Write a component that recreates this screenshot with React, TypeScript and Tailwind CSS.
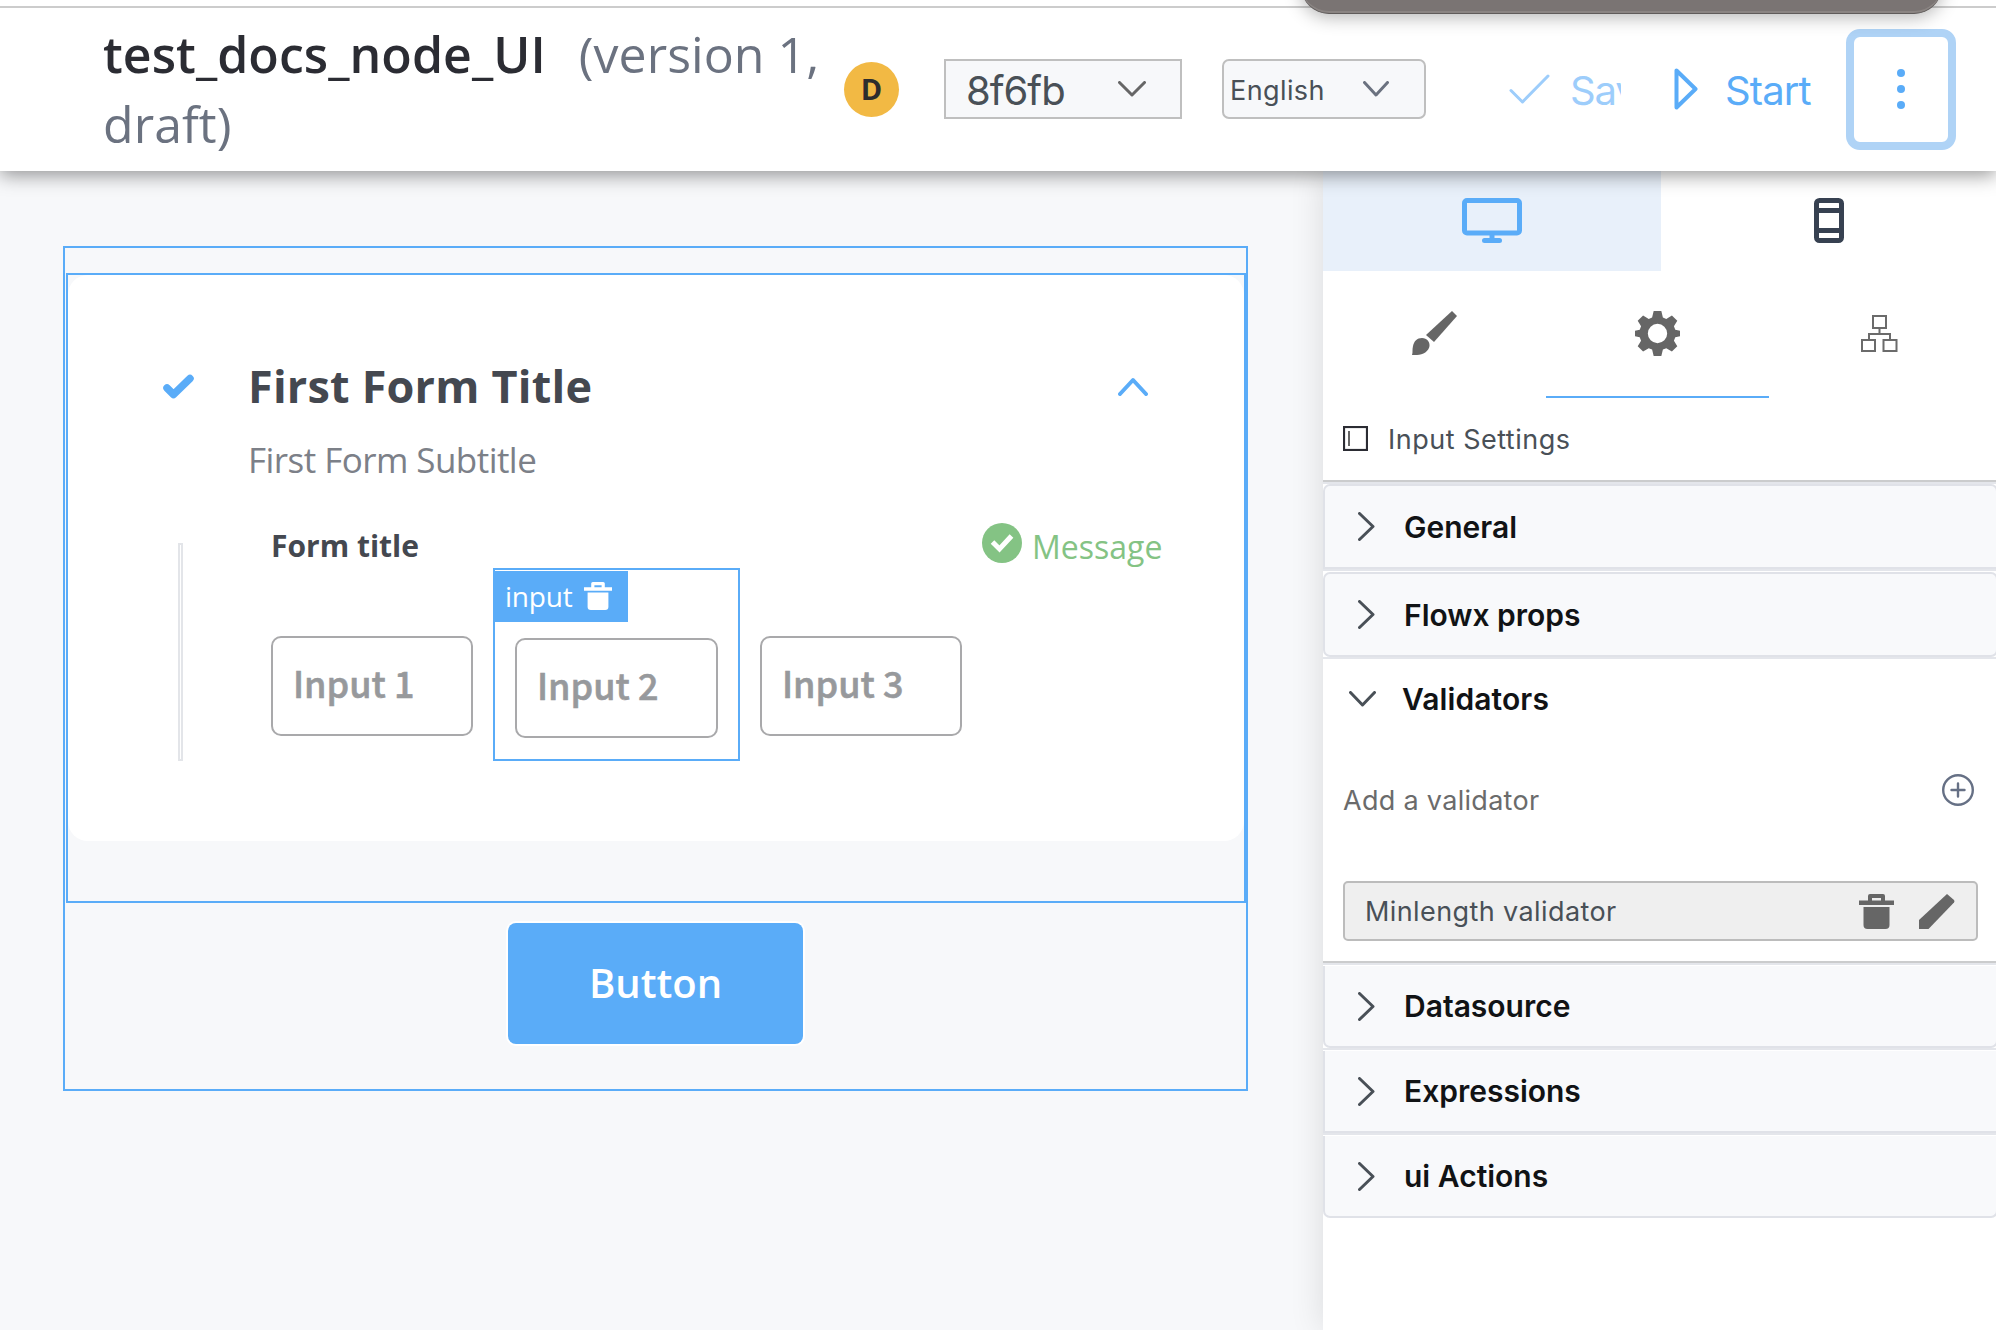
import React from "react";

function Chevron({ dir, w, h, color, sw = 3 }: { dir: "down" | "up" | "right"; w: number; h: number; color: string; sw?: number }) {
  const p = sw / 2;
  const pts =
    dir === "down"
      ? `${p},${p} ${w / 2},${h - p - 0.5} ${w - p},${p}`
      : dir === "up"
        ? `${p},${h - p} ${w / 2},${p + 1} ${w - p},${h - p}`
        : `${p},${p} ${w - p - 0.5},${h / 2} ${p},${h - p}`;
  return (
    <svg width={w} height={h} viewBox={`0 0 ${w} ${h}`} fill="none" className="shrink-0">
      <polyline points={pts} stroke={color} strokeWidth={sw} strokeLinecap="round" strokeLinejoin="round" />
    </svg>
  );
}

function Trash({ w, h, color }: { w: number; h: number; color: string }) {
  return (
    <svg width={w} height={h} viewBox="0 0 35 35" preserveAspectRatio="none" fill={color} className="shrink-0">
      <path fillRule="evenodd" d="M11 0h13a2 2 0 0 1 2 2v4.500h9v4.500H0V6.500h9V2a2 2 0 0 1 2-2Zm2 4v2.500h9V4Z" />
      <path d="M4.500 13h26v18a4 4 0 0 1-4 4h-18a4 4 0 0 1-4-4Z" />
    </svg>
  );
}

function Header() {
  return (
    <header className="relative z-20 flex h-[171px] shrink-0 bg-white shadow-[0_4px_18px_rgba(0,0,0,0.42)]">
      <div className="absolute inset-x-0 top-[6px] h-[2px] bg-[#cccccc]" />
      <div className="absolute -top-10 left-[1301px] h-[54px] w-[641px] rounded-b-[28px] border-b border-[#5f5b5a] bg-[#7a7473] shadow-[0_3px_18px_rgba(0,0,0,0.3),inset_0_-2px_0_#8a8482]" />
      <h1 className="ml-[103px] mt-[19px] w-[741px] font-['Open_Sans'] text-[50px] leading-[70px] tracking-[0.05px] text-[#6b7280]">
        <span className="mr-[33px] font-semibold text-[#2b2c33]">test_docs_node_UI</span>
        (version 1,
        <br />
        draft)
      </h1>
      <div className="mt-[62px] flex size-[55px] items-center justify-center rounded-full bg-[#f2b944] pb-[2px] font-['Open_Sans'] text-[29px] font-bold text-[#2d2d2d]">
        D
      </div>
      <div className="ml-[45px] mt-[59px] flex h-[60px] w-[238px] items-center justify-between border-2 border-[#bfbfbf] bg-[#f7f8fa] pl-[20px] pr-[34px] text-[40px] text-[#495057]">
        <span className="mt-[3px] tracking-[-1px]">8f6fb</span>
        <Chevron dir="down" w={28} h={16} color="#666" />
      </div>
      <div className="ml-[40px] mt-[59px] flex h-[60px] w-[204px] items-center justify-between rounded-[7px] border-2 border-[#bfbfbf] bg-[#f7f8fa] pl-[6px] pr-[35px] text-[27px] text-[#495057]">
        <span className="mt-[4px] tracking-[0.4px]">English</span>
        <Chevron dir="down" w={26} h={16} color="#6b7280" />
      </div>
      <div className="ml-[83px] mt-[59px] flex h-[60px] items-center text-[40px] text-[#9dcdfb]">
        <svg width="41" height="30" viewBox="0 0 41 30" fill="none">
          <path d="M2 16.500 13.500 28 39 2" stroke="currentColor" strokeWidth="3" strokeLinecap="round" strokeLinejoin="round" />
        </svg>
        <span className="ml-[20px] mt-[3px] w-[51px] overflow-hidden tracking-[-1.2px]">Save</span>
      </div>
      <div className="ml-[53px] mt-[59px] flex h-[60px] items-center text-[40px] text-[#5aacf8]">
        <svg width="24" height="42" viewBox="0 0 24 42" fill="none">
          <path d="M2.500 2.500v37L21.500 21Z" stroke="currentColor" strokeWidth="4" strokeLinejoin="round" />
        </svg>
        <span className="ml-[27px] mt-[3px] w-[121px] tracking-[-0.9px]">Start</span>
      </div>
      <div className="mt-[29px] flex h-[121px] w-[110px] shrink-0 flex-col items-center justify-center gap-2 rounded-[14px] border-8 border-[#afd3f6] pb-0.5">
        <i className="size-2 rounded-full bg-[#5aacf8]" />
        <i className="size-2 rounded-full bg-[#5aacf8]" />
        <i className="size-2 rounded-full bg-[#5aacf8]" />
      </div>
    </header>
  );
}

function InputBox({ label, cls = "w-[202px]" }: { label: string; cls?: string }) {
  return (
    <div
      className={`flex h-[100px] items-center rounded-[10px] border-2 border-[#a9a9ab] bg-white pb-[9px] pl-[20px] font-['Noto_Sans_CJK_SC'] text-[36px] font-medium text-[#97999c] [-webkit-text-stroke:0.6px_#97999c] ${cls}`}
    >
      {label}
    </div>
  );
}

function Canvas() {
  return (
    <main className="w-[1323px] shrink-0 bg-[#f7f8fa] pl-[63px] pt-[75px] font-['Open_Sans']">
      <section className="h-[845px] w-[1185px] border-2 border-[#5aacf8] pl-px pt-[25px]">
        <div className="h-[630px] w-[1180px] border-2 border-[#5aacf8]">
          <div className="h-[566px] rounded-[20px] bg-white pt-[79px]">
            <div className="flex h-[64px] items-center pl-[95px] pr-[96px]">
              <svg width="31" height="25" viewBox="0 0 31 25" fill="none">
                <path d="M4 14 10.500 20.500 27 4.500" stroke="#5aacf8" strokeWidth="7.500" strokeLinecap="round" strokeLinejoin="round" />
              </svg>
              <h2 className="ml-[54px] text-[45px] font-bold leading-[64px] tracking-[0.2px] text-[#444850]">First Form Title</h2>
              <div className="ml-auto">
                <Chevron dir="up" w={30} h={19} color="#5aacf8" sw={4} />
              </div>
            </div>
            <p className="ml-[180px] mt-[18px] text-[35px] leading-[48px] tracking-[-0.55px] text-[#7c8088]">First Form Subtitle</p>
            <div className="ml-[110px] mt-[39px] flex">
              <div className="mt-[20px] h-[218px] w-[5px] border-2 border-[#e3e5e9]" />
              <div className="ml-[88px]">
                <div className="flex h-[45px]">
                  <h3 className="mt-[3px] w-[711px] text-[30px] font-bold leading-[40px] text-[#444850]">Form title</h3>
                  <svg width="40" height="40" viewBox="0 0 40 40" fill="none">
                    <circle cx="20" cy="20" r="20" fill="#84c384" />
                    <path d="m10.500 19 7 7L29.500 13" stroke="#fff" strokeWidth="5" />
                  </svg>
                  <span className="ml-[10px] text-[32px] leading-[48px] text-[#84c384]">Message</span>
                </div>
                <div className="flex items-start">
                  <div className="mt-[68px]">
                    <InputBox label="Input 1" />
                  </div>
                  <div className="relative ml-5 h-[193px] w-[247px] border-2 border-[#5aacf8] pl-5 pt-[68px]">
                    <div className="absolute -left-[2px] top-px flex h-[51px] w-[135px] items-center bg-[#5aacf8] pb-[2px] pl-[12px] text-[28px] text-white">
                      <span className="w-[79px] tracking-[-0.2px]">input</span>
                      <Trash w={28} h={28} color="#fff" />
                    </div>
                    <InputBox label="Input 2" cls="w-[203px]" />
                  </div>
                  <div className="ml-5 mt-[68px]">
                    <InputBox label="Input 3" />
                  </div>
                </div>
              </div>
            </div>
          </div>
        </div>
        <button className="ml-[442px] mt-[20px] flex h-[121px] w-[295px] items-center justify-center rounded-[8px] bg-[#5aacf8] pb-0.5 text-[40px] font-semibold text-white ring-2 ring-white">
          Button
        </button>
      </section>
    </main>
  );
}

function Row({ label, cls }: { label: string; cls: string }) {
  return (
    <div className={`-mr-[2px] flex items-center border-2 border-[#e0e2e8] bg-[#f8f9fb] pl-[33px] text-[30px] font-semibold text-[#111315] ${cls}`}>
      <Chevron dir="right" w={17} h={29} color="#495057" />
      <span className="ml-[29px] mt-px">{label}</span>
    </div>
  );
}

function Line({ dark = false }: { dark?: boolean }) {
  return (
    <>
      {dark && <div className="h-[2px] bg-[#cbcccd]" />}
      <div className="h-[2px] bg-[#e4e6eb]" />
    </>
  );
}

function Panel() {
  return (
    <aside className="relative z-10 w-[673px] shrink-0 bg-white shadow-[0_0_32px_rgba(0,0,0,0.12)]">
      <div className="flex h-[100px]">
        <div className="flex w-[338px] justify-center bg-[#e8f0fa] pt-[27px]">
          <svg width="60" height="45" viewBox="0 0 60 45" fill="none">
            <rect x="2.500" y="2.500" width="55" height="32.500" rx="2.500" stroke="#5aacf8" strokeWidth="5" />
            <path d="M27.500 36h5v5h-5z" fill="#5aacf8" />
            <rect x="20" y="40" width="20" height="5" rx="2.500" fill="#5aacf8" />
          </svg>
        </div>
        <div className="flex w-[335px] justify-center pt-[27px]">
          <svg width="30" height="45" viewBox="0 0 30 45" fill="none" stroke="#374151" strokeWidth="5">
            <rect x="2.500" y="2.500" width="25" height="40" rx="3" />
            <path d="M2.500 12.500h25M2.500 32.500h25" />
          </svg>
        </div>
      </div>
      <div className="flex h-[127px]">
        <div className="flex w-[223px] justify-center pt-[40px]">
          <svg width="45" height="44" viewBox="0 0 45 44" fill="#666">
            <path d="M40 0 45 5 22 31 14 24Z" />
            <path d="M10 27c5 0 8 4 7.500 8C17 40 11 44 5 44H0C1 41 0 39 1 35c1-5 4-8 9-8Z" />
          </svg>
        </div>
        <div className="flex w-[223px] justify-center border-b-2 border-[#5aacf8] pt-[40px]">
          <svg width="45" height="45" viewBox="2 2 20 20" fill="#666">
            <path fillRule="evenodd" d="M10.300 2h3.400l.7 2.900 1.500.6L18.400 4l2.400 2.300-1.500 2.500.6 1.500 2.100.5v2.400l-2.100.5-.6 1.500 1.500 2.500-2.400 2.300-2.500-1.500-1.500.6-.7 2.900h-3.400l-.7-2.900-1.500-.6L5.600 20l-2.400-2.300 1.500-2.500-.6-1.500L2 13.200v-2.400l2.100-.5.600-1.500-1.500-2.500L5.600 4l2.500 1.500 1.500-.6ZM12 7.700a4.300 4.300 0 1 0 0 8.600 4.300 4.300 0 0 0 0-8.600Z" />
          </svg>
        </div>
        <div className="flex w-[221px] justify-center pt-[44px]">
          <svg width="37" height="37" viewBox="0 0 37 37" fill="none" stroke="#6b6b6b" strokeWidth="2">
            <path d="M12 1h13v12H12zM1 25h13v11H1zM22.500 25h13v11h-13zM18.500 13v6M8 25v-6h21v6" />
          </svg>
        </div>
      </div>
      <div className="flex h-[82px] items-center pb-[1px] pl-5 text-[27px] tracking-[0.5px] text-[#495057]">
        <svg width="25" height="25" viewBox="0 0 25 25" fill="none">
          <rect x="1" y="1" width="23" height="23" stroke="#2b2c33" strokeWidth="2.200" />
          <path d="M6 5v15" stroke="#666" strokeWidth="2" />
        </svg>
        <span className="ml-[20px] mt-[4px]">Input Settings</span>
      </div>
      <Line dark />
      <Row label="General" cls="h-[85px] rounded-t-[7px]" />
      <Line />
      <Row label="Flowx props" cls="mt-px h-[85px] rounded-[7px]" />
      <Line />
      <div className="flex h-[80px] items-center pl-[26px] text-[30px] font-semibold text-[#111315]">
        <Chevron dir="down" w={27} h={16} color="#495057" />
        <span className="ml-[26px] mt-px tracking-[0.1px]">Validators</span>
      </div>
      <div className="flex h-[142px] justify-between pl-[20px] pr-[22px] text-[27px] tracking-[0.3px] text-[#6b6b6b]">
        <span className="mt-[42px]">Add a validator</span>
        <svg width="32" height="32" viewBox="0 0 32 32" fill="none" stroke="#667085" strokeWidth="2.400" strokeLinecap="round" className="mt-[35px]">
          <circle cx="16" cy="16" r="14.800" />
          <path d="M9.500 16h13M16 9.500v13" />
        </svg>
      </div>
      <div className="ml-5 flex h-[60px] w-[635px] items-center rounded-[5px] border-2 border-[#bcbcbc] bg-[#efefef] pl-[20px] pr-[21px] text-[27px] tracking-[0.4px] text-[#495057]">
        <span className="mt-[2px]">Minlength validator</span>
        <div className="ml-auto flex gap-[25px]">
          <Trash w={35} h={35} color="#666" />
          <svg width="36" height="35" viewBox="0 0 36 35" fill="#666">
            <path d="M28 0 35 6q1 1 0 2.500L9.500 35H0V26Z" />
          </svg>
        </div>
      </div>
      <div className="h-[20px]" />
      <Line dark />
      <Row label="Datasource" cls="mt-px h-[82px] rounded-b-[7px] border-t-0" />
      <Line />
      <Row label="Expressions" cls="mt-px h-[82px] border-t-0" />
      <Line />
      <Row label="ui Actions" cls="mt-px h-[82px] rounded-b-[7px] border-t-0" />
    </aside>
  );
}

export default function App() {
  return (
    <div className="flex h-[1330px] w-[1996px] flex-col overflow-hidden bg-white font-['Inter']">
      <Header />
      <div className="flex flex-1">
        <Canvas />
        <Panel />
      </div>
    </div>
  );
}
